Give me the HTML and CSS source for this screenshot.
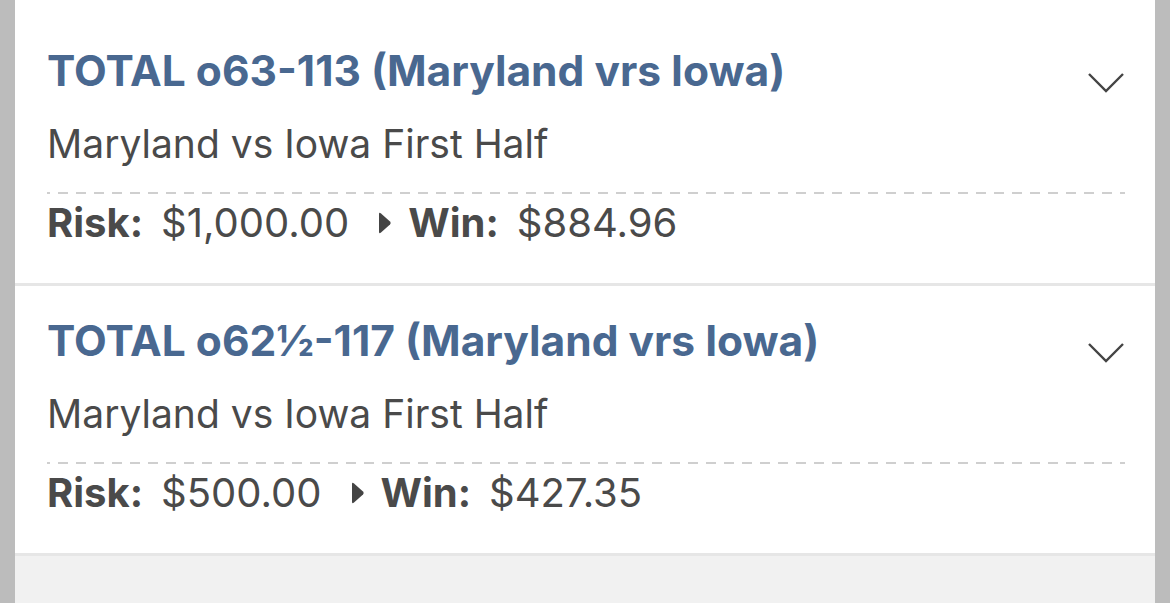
FILE: index.html
```html
<!DOCTYPE html>
<html lang="en">
<head>
    <meta charset="UTF-8">
    <meta name="viewport" content="width=device-width, initial-scale=1.0">
    <title>Open Bets</title>
    <link rel="stylesheet" href="styles.css">
</head>
<body>
    <div class="screen">
        <div class="bet-list">
            <div class="bet">
                <div class="bet-head">
                    <h2 class="bet-title">TOTAL o63-113 (Maryland vrs Iowa)</h2>
                    <svg class="chevron" width="36" height="20" viewBox="0 0 36 20">
                        <polyline points="1,1 18,18 35,1" fill="none" stroke="#444" stroke-width="2.4"/>
                    </svg>
                </div>
                <div class="bet-event">Maryland vs Iowa First Half</div>
                <div class="dash-line"></div>
                <div class="bet-amounts">
                    <span class="label">Risk:</span>
                    <span class="amount">$1,000.00</span>
                    <svg class="arrow" width="14" height="24" viewBox="0 0 14 24">
                        <path d="M1,3 Q1,1 3,2.5 L12,10.5 Q13.5,12 12,13.5 L3,21.5 Q1,23 1,21 Z" fill="#444"/>
                    </svg>
                    <span class="label">Win:</span>
                    <span class="amount">$884.96</span>
                </div>
            </div>
            <div class="bet">
                <div class="bet-head">
                    <h2 class="bet-title">TOTAL o62½-117 (Maryland vrs Iowa)</h2>
                    <svg class="chevron" width="36" height="20" viewBox="0 0 36 20">
                        <polyline points="1,1 18,18 35,1" fill="none" stroke="#444" stroke-width="2.4"/>
                    </svg>
                </div>
                <div class="bet-event">Maryland vs Iowa First Half</div>
                <div class="dash-line"></div>
                <div class="bet-amounts">
                    <span class="label">Risk:</span>
                    <span class="amount">$500.00</span>
                    <svg class="arrow" width="14" height="24" viewBox="0 0 14 24">
                        <path d="M1,3 Q1,1 3,2.5 L12,10.5 Q13.5,12 12,13.5 L3,21.5 Q1,23 1,21 Z" fill="#444"/>
                    </svg>
                    <span class="label">Win:</span>
                    <span class="amount">$427.35</span>
                </div>
            </div>
        </div>
    </div>
</body>
</html>
```

FILE: styles.css
```css
html, body { margin: 0; height: 100%; }
body { background: #bcbcbc; font-family: Inter, "Open Sans", sans-serif; color: #4a4a4a; }

.screen { margin: 0 15px; min-height: 100%; background: #f1f1f1; }
.bet-list { background: #fff; padding-top: 16px; }

.bet { padding: 30px 30px 37px 32px; border-bottom: 3px solid #e6e6e6; }
.bet-head { display: flex; justify-content: space-between; align-items: flex-start; }
.bet-title { margin: 0; font-size: 42.5px; line-height: 50px; font-weight: 700; color: #496890; }
.chevron { margin-top: 27px; margin-right: 1px; }

.bet-event { margin-top: 25px; font-size: 39px; line-height: 46px; }

.dash-line {
    margin-top: 25px;
    height: 2px;
    background-image: linear-gradient(to right, #cfcfcf 10px, transparent 10px);
    background-size: 18px 2px;
    background-position: -7px 0;
}

.bet-amounts { display: flex; align-items: center; margin-top: 6px; font-size: 40px; line-height: 46px; }
.bet-amounts .label { font-weight: 700; margin-right: 18px; }
.bet-amounts .arrow { margin: 0 16px 0 29px; }
```
